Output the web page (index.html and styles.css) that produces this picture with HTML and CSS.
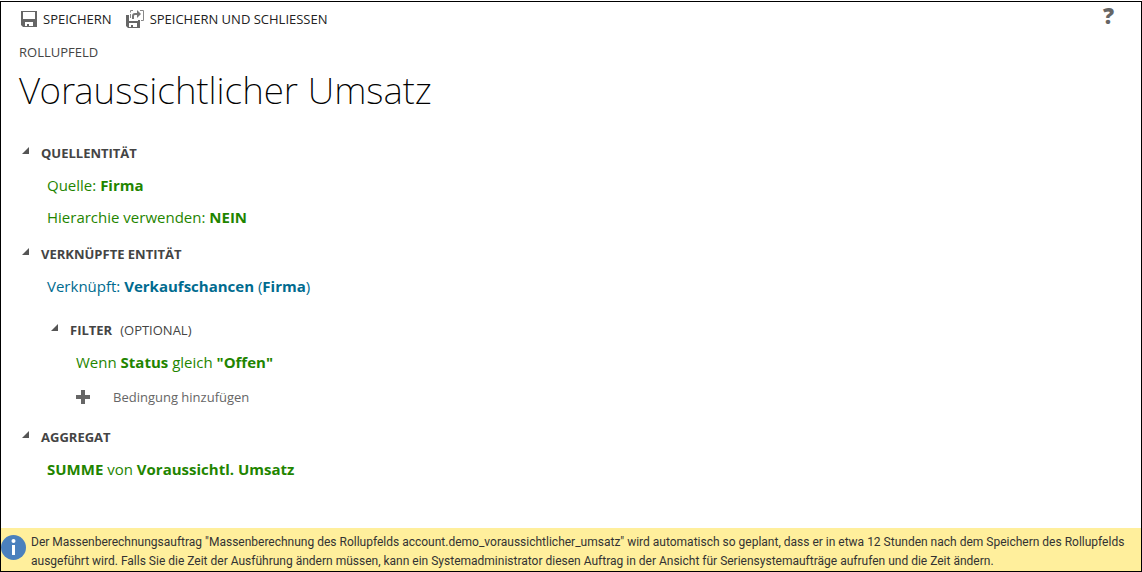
FILE: index.html
```html
<!DOCTYPE html>
<html lang="de">
<head>
    <meta charset="UTF-8">
    <meta name="viewport" content="width=device-width, initial-scale=1.0">
    <title>Rollupfeld: Voraussichtlicher Umsatz</title>
    <link rel="stylesheet" href="styles.css">
</head>
<body>
    <div class="dialog">
        <header class="toolbar">
            <button type="button" class="command">
                <svg class="save-icon" width="16" height="16" viewBox="0 0 16 16" aria-hidden="true">
                    <path fill="#666" fill-rule="evenodd" d="M0 0h16v16H2l-2-2zM2 1v7h12V1zM4 11v4h2v-2h2v2h4v-4z"/>
                </svg>
                <span>SPEICHERN</span>
            </button>
            <button type="button" class="command">
                <svg class="save-close-icon" width="18" height="18" viewBox="0 0 18 18" aria-hidden="true">
                    <path fill="#666" fill-rule="evenodd" d="M0 5h3v6h9v-1h2v8H2l-2-2zM3 13v4h2v-2h2v2h4v-4z"/>
                    <path fill="none" stroke="#888" d="M7 .5H4.500v2M4.500 4v4M14 .5h3.500v10H15"/>
                    <path fill="none" stroke="#777" stroke-width="2" d="M7 9V6q0-2 2-2h3"/>
                    <path fill="#777" d="M11 0l4 4-4 4z"/>
                </svg>
                <span>SPEICHERN UND SCHLIESSEN</span>
            </button>
            <button type="button" class="help" aria-label="Hilfe">?</button>
        </header>

        <main class="content">
            <p class="entity-type">ROLLUPFELD</p>
            <h1>Voraussichtlicher Umsatz</h1>

            <details class="section" open>
                <summary><svg class="arrow" width="7" height="7" viewBox="0 0 7 7" aria-hidden="true"><path d="M7 0v7H0z"/></svg>QUELLENTITÄT</summary>
                <p class="rule">Quelle: <b>Firma</b></p>
                <p class="rule">Hierarchie verwenden: <b>NEIN</b></p>
            </details>

            <details class="section" open>
                <summary><svg class="arrow" width="7" height="7" viewBox="0 0 7 7" aria-hidden="true"><path d="M7 0v7H0z"/></svg>VERKNÜPFTE ENTITÄT</summary>
                <p class="rule related">Verknüpft: <b>Verkaufschancen</b> (<b>Firma</b>)</p>

                <details class="section filter" open>
                    <summary><svg class="arrow" width="7" height="7" viewBox="0 0 7 7" aria-hidden="true"><path d="M7 0v7H0z"/></svg>FILTER <span class="optional">(OPTIONAL)</span></summary>
                    <p class="rule">Wenn <b>Status</b> gleich <b>"Offen"</b></p>
                    <button type="button" class="add-condition">
                        <svg width="14" height="14" viewBox="0 0 14 14" aria-hidden="true"><path fill="#666" d="M5 0h4v5h5v4H9v5H5V9H0V5h5z"/></svg>
                        <span>Bedingung hinzufügen</span>
                    </button>
                </details>
            </details>

            <details class="section" open>
                <summary><svg class="arrow" width="7" height="7" viewBox="0 0 7 7" aria-hidden="true"><path d="M7 0v7H0z"/></svg>AGGREGAT</summary>
                <p class="rule"><b>SUMME</b> von <b>Voraussichtl. Umsatz</b></p>
            </details>
        </main>

        <footer class="notice">
            <svg class="info-icon" width="25" height="25" viewBox="0 0 25 25" aria-hidden="true">
                <circle cx="12.500" cy="12.500" r="12.500" fill="#4a80bd"/>
                <circle cx="12.500" cy="6" r="2" fill="#fff"/>
                <path fill="#fff" d="M11 10h3v10h-3z"/>
            </svg>
            <p>Der Massenberechnungsauftrag "Massenberechnung des Rollupfelds account.demo_voraussichtlicher_umsatz" wird automatisch so geplant, dass er in etwa 12 Stunden nach dem Speichern des Rollupfelds ausgeführt wird. Falls Sie die Zeit der Ausführung ändern müssen, kann ein Systemadministrator diesen Auftrag in der Ansicht für Seriensystemaufträge aufrufen und die Zeit ändern.</p>
        </footer>
    </div>
</body>
</html>
```
FILE: styles.css
```css
* {
    box-sizing: border-box;
}

body {
    margin: 0;
    padding-top: 1px;
    min-height: 100vh;
    display: flex;
    background-color: #fff;
    color: #444;
    font-family: 'Segoe UI', 'Open Sans', 'Noto Sans', sans-serif;
    font-size: 13px;
}

p, h1 {
    margin: 0;
}

button {
    padding: 0;
    border: none;
    background: none;
    color: inherit;
    font: inherit;
    cursor: pointer;
}

.dialog {
    flex: 1;
    display: flex;
    flex-direction: column;
    border: 1px solid #000;
}

.toolbar {
    display: flex;
    align-items: center;
    gap: 14px;
    height: 34px;
    padding: 0 27px 0 20px;
}

.command {
    display: flex;
    align-items: center;
    gap: 6px;
    color: #222;
}

.help {
    margin-left: auto;
    color: #666;
    font-size: 22px;
    font-weight: 800;
    line-height: 26px;
    align-self: flex-start;
}

.content {
    flex: 1;
    padding: 8px 18px 0;
}

.entity-type {
    line-height: 16px;
}

h1 {
    margin-bottom: 17px;
    color: #000;
    font-family: 'Segoe UI Light', 'Noto Sans', 'Open Sans', sans-serif;
    font-size: 37px;
    font-weight: 200;
    line-height: 60px;
}

.section {
    margin-bottom: 5px;
}

summary {
    display: flex;
    align-items: center;
    height: 32px;
    padding-left: 3px;
    font-weight: 700;
    list-style: none;
    cursor: pointer;
}

.arrow {
    margin: 0 12px 5px 0;
    fill: #555;
}

.optional {
    margin-left: 8px;
    font-weight: 400;
}

.rule {
    padding-left: 28px;
    color: #1f8500;
    font-size: 15px;
    line-height: 32px;
}

.related {
    color: #006b8f;
}

.filter {
    margin-top: 12px;
    margin-left: 29px;
}

.add-condition {
    display: flex;
    align-items: center;
    gap: 23px;
    height: 38px;
    padding-left: 28px;
    color: #666;
}

.notice {
    display: flex;
    align-items: flex-start;
    gap: 5px;
    padding: 5px 2px 0 0;
    background-color: #ffef9c;
    color: #333;
    font-family: 'Segoe UI', Roboto, sans-serif;
    font-size: 12px;
    line-height: 19px;
}

.info-icon {
    flex-shrink: 0;
    margin-top: 2px;
}
```
